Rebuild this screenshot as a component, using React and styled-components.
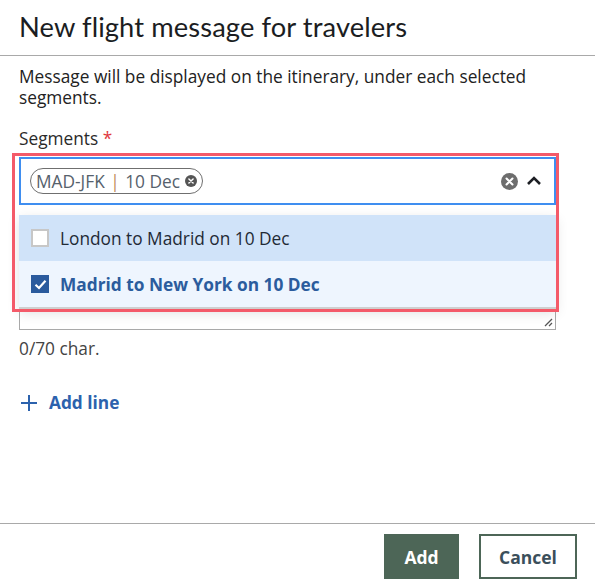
import React from "react";
import styled, { createGlobalStyle } from "styled-components";

const Global = createGlobalStyle`
  html, body { margin: 0; padding: 0; background: #fff; }
  body { font-family: "Open Sans", "Liberation Sans", sans-serif; color: #222; }
  * { box-sizing: border-box; }
`;

const Dialog = styled.div`
  width: 595px;
  height: 587px;
  display: flex;
  flex-direction: column;
  background: #fff;
`;

const Header = styled.header`
  height: 56px;
  flex: none;
  display: flex;
  align-items: center;
  padding: 0 19px 2px;
  border-bottom: 1px solid #a9a9a9;
`;

const Title = styled.h1`
  margin: 0;
  font-family: Lato, "Open Sans", sans-serif;
  font-weight: 400;
  font-size: 27.3px;
  color: #1b1d22;
  letter-spacing: 0.1px;
`;

const Body = styled.main`
  flex: 1;
  padding: 10px 39px 0 19px;
  display: flex;
  flex-direction: column;
`;

const Intro = styled.p`
  margin: 0;
  font-size: 17.3px;
  line-height: 21px;
  color: #222;
`;

const Label = styled.label`
  display: block;
  margin-top: 20px;
  font-size: 17.3px;
  line-height: 21px;
  color: #2a2a2a;
`;

const Req = styled.span`
  color: #e0393e;
`;

const Combo = styled.div`
  position: relative;
  margin-top: 8px;
`;

const Input = styled.div`
  height: 48px;
  border: 2px solid #3f8ef0;
  display: flex;
  align-items: center;
  padding: 0 12px 0 9px;
  background: #fff;
`;

const Chip = styled.span`
  display: inline-flex;
  align-items: center;
  height: 26px;
  padding: 0 5px 0 5px;
  border: 1px solid #6f6f6f;
  border-radius: 13px;
  font-size: 17.3px;
  color: #56616c;
  gap: 5px;
`;

const Sep = styled.span`
  color: #c08a5a;
  margin: 0 1px;
`;

const Spacer = styled.div`
  flex: 1;
`;

const Icons = styled.div`
  display: flex;
  align-items: center;
  gap: 8px;
`;

const Dropdown = styled.ul`
  position: absolute;
  left: 0;
  right: 0;
  top: 58px;
  margin: 0;
  padding: 0;
  list-style: none;
  background: #fff;
  border-bottom: 2px solid #cfcfcf;
  box-shadow: 0 4px 12px rgba(0, 0, 0, 0.12);
  z-index: 2;
`;

const Option = styled.li`
  height: 46px;
  display: flex;
  align-items: center;
  padding-left: 12px;
  gap: 11px;
  font-size: 17.3px;
  background: ${(p) => (p.$selected ? "#eef5fe" : "#d0e3f9")};
  color: ${(p) => (p.$selected ? "#2b5c9d" : "#1f2a36")};
  font-weight: ${(p) => (p.$selected ? 700 : 400)};
`;

const Box = styled.span`
  width: 18px;
  height: 18px;
  flex: none;
  display: inline-flex;
  align-items: center;
  justify-content: center;
  background: ${(p) => (p.$checked ? "#2a5a9d" : "#fff")};
  border: ${(p) => (p.$checked ? "1px solid #2a5a9d" : "2px solid #c7c7c7")};
`;

const Highlight = styled.div`
  position: absolute;
  left: -7px;
  right: -3px;
  top: -4px;
  height: 159px;
  border: 3px solid #f45a69;
  pointer-events: none;
  z-index: 3;
`;

const TextArea = styled.div`
  position: relative;
  margin-top: 20px;
  height: 105px;
  border: 1px solid #a9a9a9;
`;

const Grip = styled.svg`
  position: absolute;
  right: 2px;
  bottom: 2px;
`;

const Counter = styled.div`
  margin-top: 8px;
  font-size: 17.3px;
  line-height: 21px;
  color: #444;
`;

const AddLine = styled.button`
  margin-top: 32px;
  align-self: flex-start;
  display: inline-flex;
  align-items: center;
  gap: 11px;
  padding: 0 0 0 1px;
  border: 0;
  background: none;
  font-family: "Open Sans", sans-serif;
  font-weight: 700;
  font-size: 17.3px;
  color: #2c62ad;
`;

const Footer = styled.footer`
  flex: none;
  height: 64px;
  border-top: 1px solid #a9a9a9;
  display: flex;
  justify-content: flex-end;
  align-items: flex-start;
  gap: 20px;
  padding: 10px 18px 0 0;
`;

const Button = styled.button`
  height: 45px;
  padding: 0;
  width: ${(p) => (p.$primary ? "75px" : "98px")};
  font-family: "Open Sans", sans-serif;
  font-weight: 700;
  font-size: 17.5px;
  border: 2px solid #4d6657;
  background: ${(p) => (p.$primary ? "#4d6657" : "#fff")};
  color: ${(p) => (p.$primary ? "#fff" : "#3b4f5b")};
`;

const ClearIcon = ({ size = 17, fill = "#6d6d6d" }) => (
  <svg width={size} height={size} viewBox="0 0 20 20">
    <circle cx="10" cy="10" r="10" fill={fill} />
    <path d="M6.5 6.5 L13.5 13.5 M13.5 6.5 L6.5 13.5" stroke="#fff" strokeWidth="2.4" strokeLinecap="round" />
  </svg>
);

const Chevron = () => (
  <svg width="16" height="10" viewBox="0 0 16 10">
    <path d="M2 8 L8 2 L14 8" fill="none" stroke="#1d1f24" strokeWidth="2.6" />
  </svg>
);

const Check = () => (
  <svg width="13" height="11" viewBox="0 0 13 11">
    <path d="M1.5 5.8 L5 9 L11.5 1.8" fill="none" stroke="#fff" strokeWidth="2.2" />
  </svg>
);

const Plus = () => (
  <svg width="18" height="18" viewBox="0 0 18 18">
    <path d="M9 1 V17 M1 9 H17" stroke="#2c62ad" strokeWidth="2" />
  </svg>
);

export default function App() {
  return (
    <>
      <Global />
      <Dialog>
        <Header>
          <Title>New flight message for travelers</Title>
        </Header>
        <Body>
          <Intro>Message will be displayed on the itinerary, under each selected segments.</Intro>
          <Label>
            Segments <Req>*</Req>
          </Label>
          <Combo>
            <Input>
              <Chip>
                <span>
                  MAD-JFK <Sep>|</Sep> 10 Dec
                </span>
                <ClearIcon size={12} fill="#555" />
              </Chip>
              <Spacer />
              <Icons>
                <ClearIcon />
                <Chevron />
              </Icons>
            </Input>
            <Dropdown>
              <Option>
                <Box />
                <span>London to Madrid on 10 Dec</span>
              </Option>
              <Option $selected>
                <Box $checked>
                  <Check />
                </Box>
                <span>Madrid to New York on 10 Dec</span>
              </Option>
            </Dropdown>
            <Highlight />
          </Combo>
          <TextArea>
            <Grip width="10" height="10" viewBox="0 0 10 10">
              <path d="M9 2 L2 9 M9 6 L6 9" stroke="#555" strokeWidth="1.3" />
            </Grip>
          </TextArea>
          <Counter>0/70 char.</Counter>
          <AddLine>
            <Plus />
            Add line
          </AddLine>
        </Body>
        <Footer>
          <Button $primary>Add</Button>
          <Button>Cancel</Button>
        </Footer>
      </Dialog>
    </>
  );
}
